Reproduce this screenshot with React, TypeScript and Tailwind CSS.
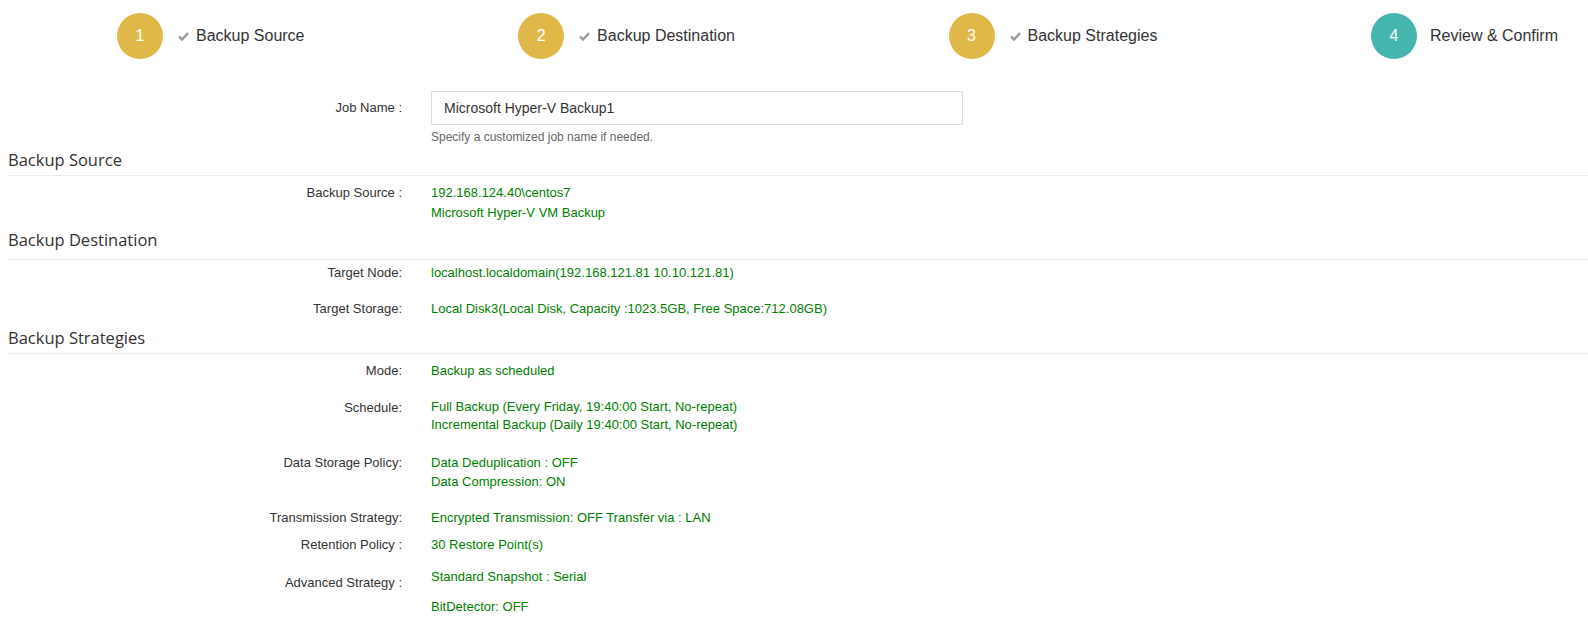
import React from 'react'

const steps = [
	{ n: 1, title: 'Backup Source', done: true },
	{ n: 2, title: 'Backup Destination', done: true },
	{ n: 3, title: 'Backup Strategies', done: true },
	{ n: 4, title: 'Review & Confirm', done: false },
]

function Check() {
	return (
		<svg width="11" height="9" viewBox="0 0 11 9" className="shrink-0">
			<path d="M1 4.5 L4 7.5 L10 1.2" fill="none" stroke="#9a9a9a" strokeWidth="2.4" strokeLinejoin="miter" />
		</svg>
	)
}

function Heading({ title, className = '' }: { title: string; className?: string }) {
	return (
		<div className={`ml-2 border-b border-[#ececec] ${className}`}>
			<h3 className="font-['Open_Sans',sans-serif] text-[16.5px] leading-[22px] text-[#333]">{title}</h3>
		</div>
	)
}

function Row({
	label,
	children,
	className = '',
	labelClass = '',
}: {
	label: string
	children: React.ReactNode
	className?: string
	labelClass?: string
}) {
	return (
		<div className={`flex ${className}`}>
			<div className={`w-[402px] shrink-0 text-right text-[13px] leading-[20px] text-[#333] ${labelClass}`}>
				{label}
			</div>
			<div className="ml-[29px] text-[13px] leading-[20px] text-[#008000]">{children}</div>
		</div>
	)
}

export default function App() {
	return (
		<div className="min-h-[636px] w-full bg-white font-['Liberation_Sans',Arial,sans-serif]">
			{/* wizard steps */}
			<div className="flex items-center justify-between pl-[117px] pr-[30px] pt-[13px]">
				{steps.map((s) => (
					<div key={s.n} className="flex items-center">
						<div
							className={`flex h-[46px] w-[46px] items-center justify-center rounded-full text-[16px] text-white ${
								s.done ? 'bg-[#e0b84a]' : 'bg-[#45b6ad]'
							}`}
						>
							{s.n}
						</div>
						{s.done ? (
							<div className="ml-[15px] flex items-center gap-[7px]">
								<Check />
								<span className="text-[16px] text-[#333]">{s.title}</span>
							</div>
						) : (
							<span className="ml-[13px] text-[16px] text-[#333]">{s.title}</span>
						)}
					</div>
				))}
			</div>

			{/* job name */}
			<div className="mt-[32px] flex items-center">
				<div className="w-[402px] shrink-0 text-right text-[13px] text-[#333]">Job Name :</div>
				<div className="ml-[29px] flex h-[34px] w-[532px] items-center border border-[#ddd] px-3 text-[14px] text-[#333]">
					Microsoft Hyper-V Backup1
				</div>
			</div>
			<div className="ml-[431px] mt-[5px] text-[12px] leading-[14px] text-[#666]">
				Specify a customized job name if needed.
			</div>

			<Heading title="Backup Source" className="mt-[5px] pb-[4px]" />
			<Row label="Backup Source :" className="mt-[7px]">
				<div>192.168.124.40\centos7</div>
				<div>Microsoft Hyper-V VM Backup</div>
			</Row>

			<Heading title="Backup Destination" className="mt-[6px] pb-[8px]" />
			<Row label="Target Node:" className="mt-[3px]">
				localhost.localdomain(192.168.121.81 10.10.121.81)
			</Row>
			<Row label="Target Storage:" className="mt-[16px]">
				Local Disk3(Local Disk, Capacity :1023.5GB, Free Space:712.08GB)
			</Row>

			<Heading title="Backup Strategies" className="mt-[8px] pb-[4px]" />
			<Row label="Mode:" className="mt-[7px]">
				Backup as scheduled
			</Row>
			<Row label="Schedule:" className="mt-[17px]">
				<div className="leading-[18px]">Full Backup (Every Friday, 19:40:00 Start, No-repeat)</div>
				<div className="leading-[18px]">Incremental Backup (Daily 19:40:00 Start, No-repeat)</div>
			</Row>
			<Row label="Data Storage Policy:" className="mt-[19px]">
				<div className="leading-[19px]">Data Deduplication : OFF</div>
				<div className="leading-[19px]">Data Compression: ON</div>
			</Row>
			<Row label="Transmission Strategy:" className="mt-[17px]">
				Encrypted Transmission: OFF Transfer via : LAN
			</Row>
			<Row label="Retention Policy :" className="mt-[7px]">
				30 Restore Point(s)
			</Row>
			<Row label="Advanced Strategy :" className="mt-[7px]" labelClass="pt-[11px]">
				<div className="leading-[30px]">Standard Snapshot : Serial</div>
				<div className="leading-[30px]">BitDetector: OFF</div>
			</Row>
		</div>
	)
}
